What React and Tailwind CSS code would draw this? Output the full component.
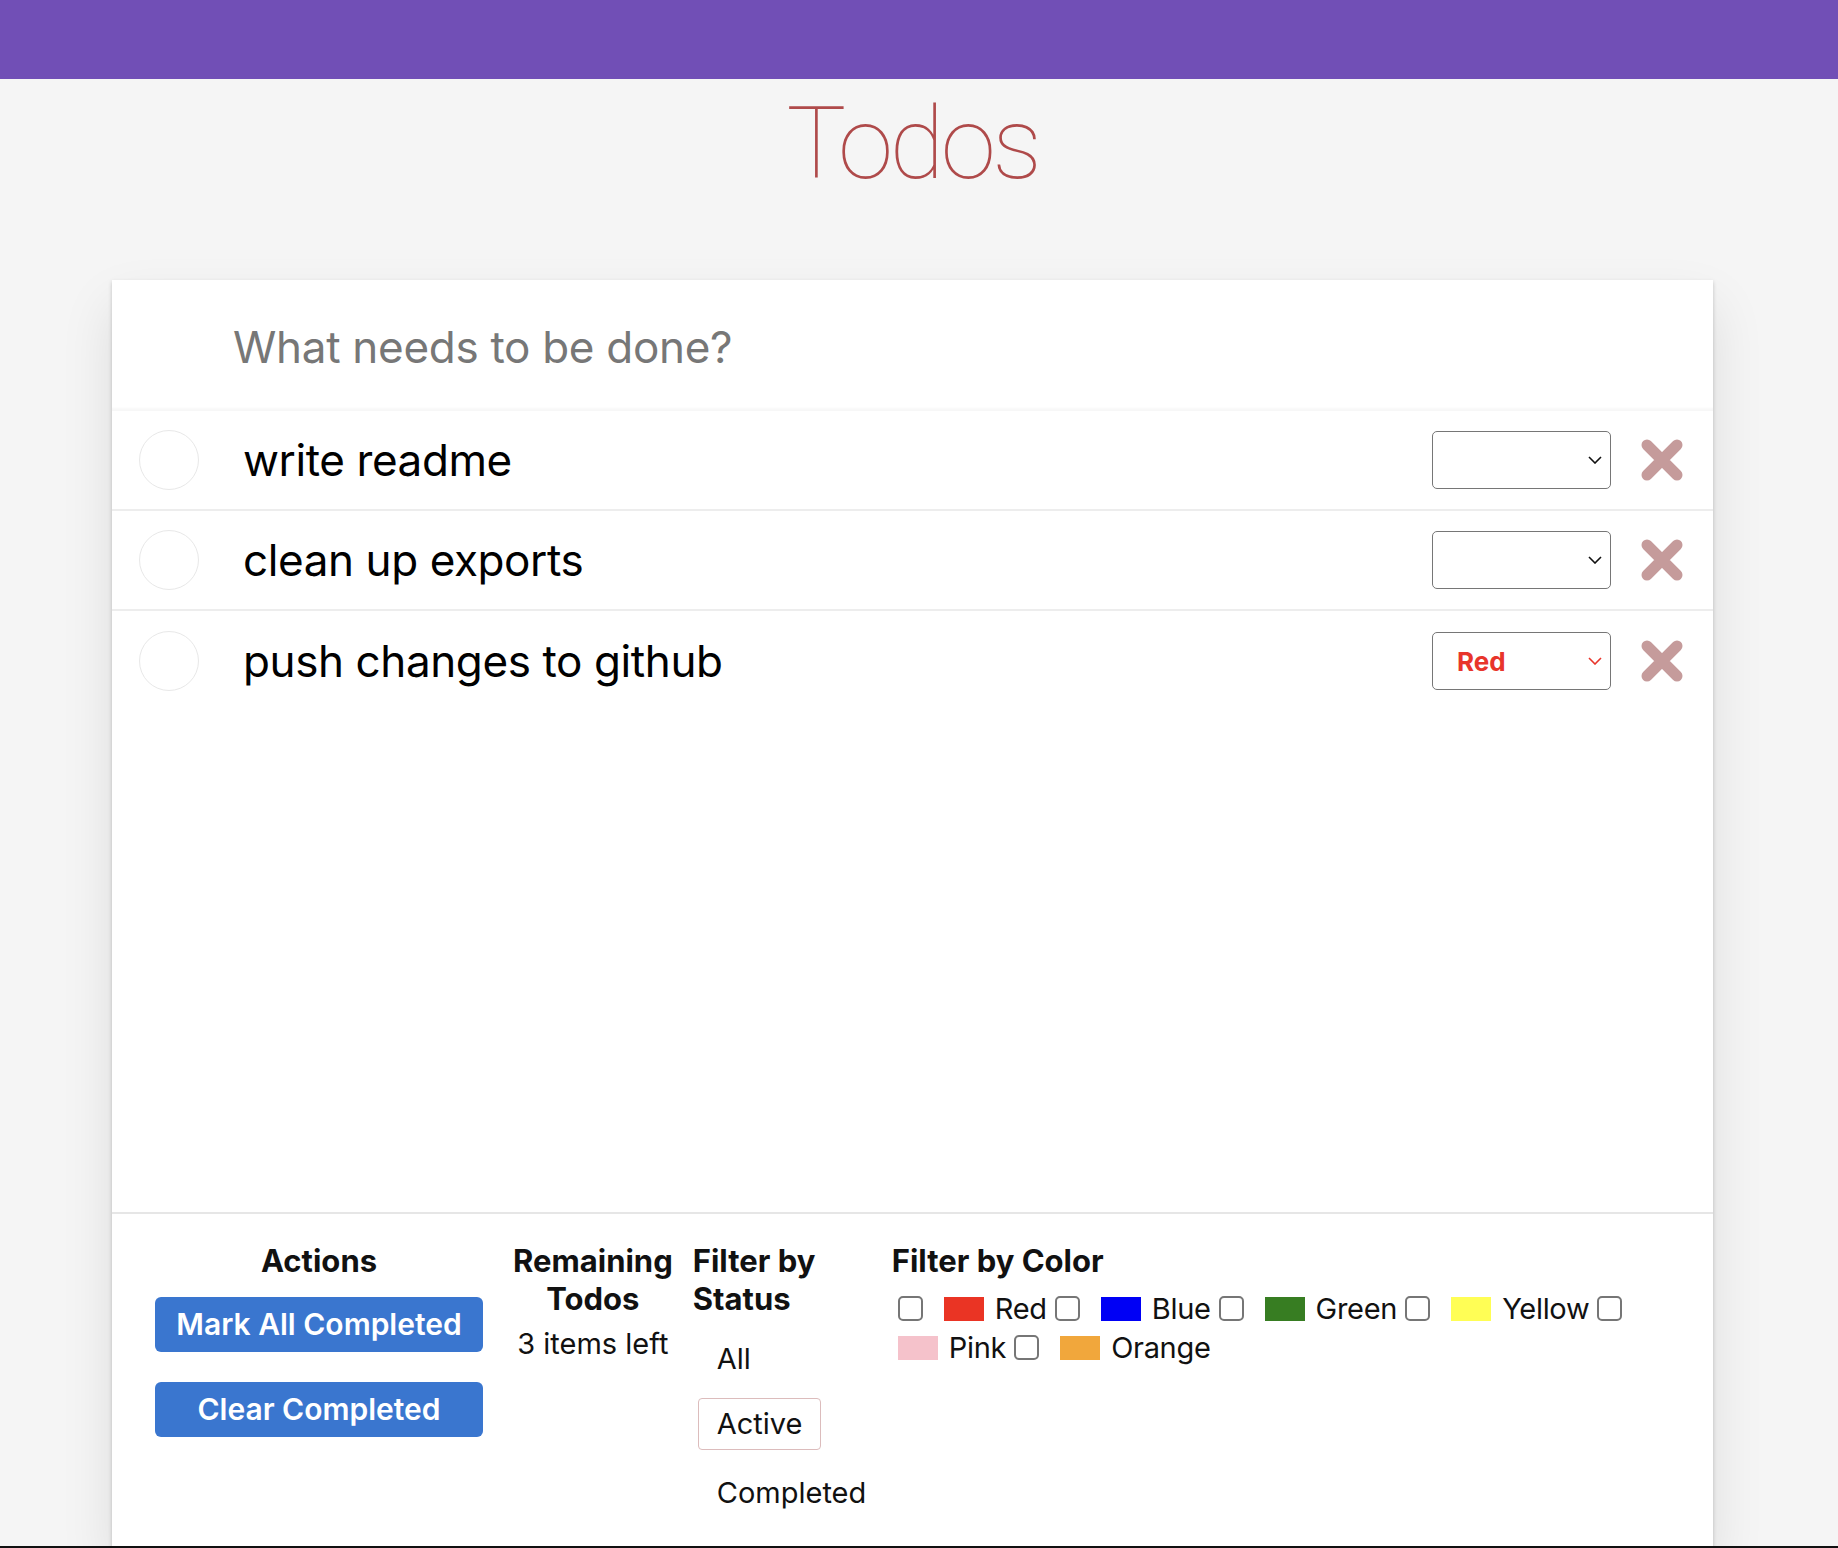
const todos = [
  { id: 1, text: "write readme", color: "" },
  { id: 2, text: "clean up exports", color: "" },
  { id: 3, text: "push changes to github", color: "red" },
];

const colors = [
  { name: "Red", swatch: "bg-[#ea3424]" },
  { name: "Blue", swatch: "bg-[#0000f5]" },
  { name: "Green", swatch: "bg-[#377d22]" },
  { name: "Yellow", swatch: "bg-[#fffe55]" },
  { name: "Pink", swatch: "bg-[#f5c2cb]" },
  { name: "Orange", swatch: "bg-[#f1a73c]" },
];

const Chevron = ({ red }) => (
  <svg width="14" height="8" viewBox="0 0 14 8" className="ml-auto mr-[8px]">
    <path
      d="M1 1l6 6 6-6"
      fill="none"
      stroke={red ? "#e8352b" : "#111"}
      strokeWidth="1.6"
    />
  </svg>
);

const DeleteIcon = () => (
  <svg width="42" height="42" viewBox="0 0 42 42">
    <path
      d="M6 6L36 36M36 6L6 36"
      stroke="#c59b9b"
      strokeWidth="11"
      strokeLinecap="round"
    />
  </svg>
);

const TodoRow = ({ todo, last }) => (
  <li
    className={`h-[100px] flex items-center pl-[27px] pr-[30px] ${
      last ? "" : "border-b-2 border-[#ededed]"
    }`}
  >
    <div className="w-[60px] h-[60px] rounded-full border-[1.5px] border-[#e8e8e8] shrink-0" />
    <span className="ml-[44px] text-[44px] tracking-[-0.4px] text-black">{todo.text}</span>
    <div className="ml-auto w-[179px] h-[58px] border-[1.5px] border-[#767676] rounded-[5px] flex items-center bg-white">
      {todo.color === "red" && (
        <span className="pl-[24px] text-[26px] font-bold text-[#e8352b]">Red</span>
      )}
      <Chevron red={todo.color === "red"} />
    </div>
    <button className="ml-[30px] w-[42px] h-[42px] flex items-center justify-center">
      <DeleteIcon />
    </button>
  </li>
);

const App = () => {
  return (
    <div className="h-[1548px] overflow-hidden bg-[#f5f5f5] flex flex-col font-['Inter',sans-serif] text-[#111]">
      <div className="h-[79px] shrink-0 bg-[#714fb6]" />
      <div className="flex-1 min-h-0 flex flex-col items-center pr-[13px]">
        <h1 className="mt-[15px] h-[100px] text-[100px] leading-[100px] tracking-[-3.5px] font-thin text-[#af4a4a] font-['Roboto',sans-serif]">
          Todos
        </h1>
        <div className="mt-[86px] w-[1601px] flex-1 flex flex-col bg-white shadow-[0_2px_4px_0_rgba(0,0,0,0.2),0_25px_50px_0_rgba(0,0,0,0.1)]">
          {/* new todo input */}
          <div className="h-[131px] shrink-0 flex items-center pl-[121px] pt-[2px] shadow-[inset_0_-4px_2px_-1px_rgba(0,0,0,0.03)]">
            <input
              className="w-full text-[44px] tracking-[-0.3px] outline-none bg-transparent placeholder:text-[#777]"
              placeholder="What needs to be done?"
            />
          </div>

          {/* list */}
          <ul className="h-[801px] shrink-0">
            {todos.map((t, i) => (
              <TodoRow key={t.id} todo={t} last={i === todos.length - 1} />
            ))}
          </ul>

          {/* footer */}
          <footer className="flex-1 border-t-2 border-[#e6e6e6] flex pl-[43px] pt-[28px]">
            <div className="w-[328px] flex flex-col items-center">
              <h5 className="text-[31px] leading-[38px] font-bold">Actions</h5>
              <button className="mt-[17px] w-full h-[55px] rounded-[6px] bg-[#3a76cf] text-white text-[30px] font-semibold">
                Mark All Completed
              </button>
              <button className="mt-[30px] w-full h-[55px] rounded-[6px] bg-[#3a76cf] text-white text-[30px] font-semibold">
                Clear Completed
              </button>
            </div>

            <div className="ml-[30px] flex flex-col items-center text-center">
              <h5 className="text-[31px] leading-[38px] font-bold">
                Remaining
                <br />
                Todos
              </h5>
              <div className="mt-[6px] text-[29px] leading-[39px]">3 items left</div>
            </div>

            <div className="ml-[20px] w-[180px] shrink-0">
              <h5 className="text-[31px] leading-[38px] font-bold">
                Filter by
                <br />
                Status
              </h5>
              <ul className="ml-[5px] mt-[15px] flex flex-col items-start">
                {["All", "Active", "Completed"].map((s, i) => (
                  <li key={s} className={i === 1 ? "mt-[13px]" : i === 2 ? "mt-[17px]" : ""}>
                    <button
                      className={`px-[18px] py-[7px] rounded-[4px] border-[1.5px] text-[29px] leading-[36px] whitespace-nowrap ${
                        s === "Active" ? "border-[#dcbcbc]" : "border-transparent"
                      }`}
                    >
                      {s}
                    </button>
                  </li>
                ))}
              </ul>
            </div>

            <div className="ml-[19px] flex-1 pr-[30px]">
              <h5 className="text-[31px] leading-[38px] font-bold">Filter by Color</h5>
              <div className="mt-[9px] pl-[6px] flex flex-wrap items-center text-[29px]">
                {colors.map((c) => (
                  <label key={c.name} className="contents">
                    <span className="h-[39px] flex items-center">
                      <input
                        type="checkbox"
                        className="appearance-none w-[25px] h-[25px] border-2 border-[#767676] rounded-[5px] bg-white mr-[21px]"
                      />
                    </span>
                    <span className="h-[39px] flex items-center mr-[8px]">
                      <span className={`w-[40px] h-[24px] ${c.swatch}`} />
                      <span className="ml-[11px] tracking-[-0.3px]">{c.name}</span>
                    </span>
                  </label>
                ))}
              </div>
            </div>
          </footer>
        </div>
      </div>
      <div className="h-[2px] shrink-0 bg-[#111]" />
    </div>
  );
};

export default App;
